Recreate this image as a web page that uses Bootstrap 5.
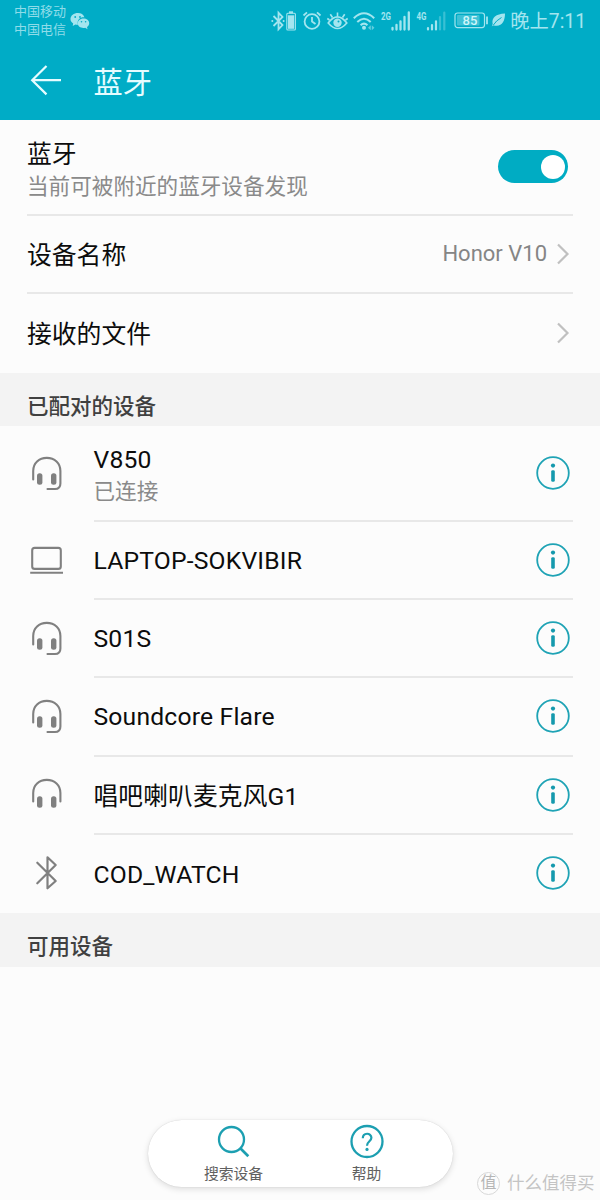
<!DOCTYPE html>
<html lang="zh-CN">
<head>
<meta charset="utf-8">
<meta name="viewport" content="width=device-width, initial-scale=1">
<title>蓝牙</title>
<link href="https://cdn.jsdelivr.net/npm/bootstrap@5.3.0/dist/css/bootstrap.min.css" rel="stylesheet">
<style>
  body { font-family: Roboto, "Noto Sans CJK SC", sans-serif; background: #fcfcfc; color: #0c0c0c; }
  svg { display: block; overflow: visible; flex: none; }
  .screen { width: 600px; height: 1200px; overflow: hidden; }
  .topbar { height: 120px; background: #00acc6; }
  .status { height: 40px; color: #a3e5ef; padding: 1px 14px 0; }
  .carriers { font-size: 13px; line-height: 18px; color: #8fdce9; padding-top: 1px; }
  .status-icons { gap: 5px; }
  .clock { font-size: 19.3px; line-height: 38px; padding-top: 2px; white-space: nowrap; }
  .titlebar { height: 80px; padding: 0 27px; color: #e6fcff; }
  .titlebar h1 { font-size: 29.2px; line-height: 40px; font-weight: 400; margin-left: 28.5px; padding-top: 6px; }
  .setting { margin: 0 27px; height: 78px; border-bottom: 2px solid #e8e8e8; font-size: 24.8px; line-height: 30px; }
  .setting.tall { height: 96px; }
  .setting.final { border-bottom: 0; height: 79px; padding-bottom: 1px; }
  .setting .label { padding-top: 3px; }
  .two-line { padding-top: 4px; }
  .device { padding: 0 27px; height: 78.2px; }
  .device.tall { height: 96px; }
  .device-icon { width: 66.5px; color: #808080; padding-bottom: 3px; }
  .device-body { height: 100%; border-bottom: 2px solid #e8e8e8; font-size: 24.7px; line-height: 30px; }
  .device-body svg { margin-right: 3px; }
  .device:last-child .device-body { border-bottom-color: transparent; }
  .latin { letter-spacing: .18px; padding-top: 1px; }
  .sub { font-size: 21.6px; line-height: 30px; padding-top: 2px; color: #8a8a8a; }
  .value { font-size: 22px; color: #858585; }
  .section { height: 54px; padding: 13px 27px 0; background: #f3f3f3; color: #404040; font-size: 21.5px; line-height: 42px; font-weight: 500; margin: 0; }
  .section.paired { height: 53px; line-height: 41px; }
  .toggle { width: 70px; height: 33px; background: #00acc3; padding: 0 3.5px; margin: 0 5px 1px 0; }
  .toggle span { width: 24px; height: 24px; background: #fff; }
  .dock { left: 148px; top: 1120px; width: 305px; height: 67px; background: #fff; box-shadow: 0 2px 6px rgba(0,0,0,.13), 0 0 1px rgba(0,0,0,.2); color: #1c9fb1; }
  .dock-item { width: 133px; font-size: 14.8px; line-height: 20px; }
  .dock-item span { color: #606060; padding-top: 2px; margin-left: -1px; }
  .watermark { left: 477px; top: 1171px; color: #c4c4c4; font-size: 17.5px; line-height: 25px; white-space: nowrap; gap: 7px; }
  .stamp { width: 23px; height: 23px; border: 1px solid #d8d8d8; font-size: 16px; line-height: 20px; color: #b5b5b5; }
</style>
</head>
<body>
<svg width="0" height="0" class="position-absolute" aria-hidden="true">
  <defs>
    <symbol id="info" viewBox="0 0 34 34"><circle cx="17" cy="17" r="15.8" fill="none" stroke="#1fa3b5" stroke-width="1.8"/><circle cx="17" cy="9.6" r="2.1" fill="#1599ad"/><rect x="15.2" y="14.2" width="3.6" height="11.6" rx="1.4" fill="#1599ad"/></symbol>
    <symbol id="chevron" viewBox="0 0 14 22"><path d="M2 1.5 L11.5 11 L2 20.5" fill="none" stroke="#c0c0c0" stroke-width="2.2"/></symbol>
    <symbol id="headset" viewBox="0 0 38 38"><g fill="none" stroke="currentColor" stroke-width="2.1" stroke-linecap="round"><path d="M6.2 25.5 V17 C6.2 9 12 3.9 19.8 3.9 S33.4 9 33.4 17 V29.5 Q33.4 35 28 35 H20.5"/></g><rect x="10" y="19.3" width="5.4" height="11.5" rx="2.5" fill="currentColor"/><rect x="24" y="19.3" width="5.4" height="11.5" rx="2.5" fill="currentColor"/></symbol>
    <symbol id="headphones" viewBox="0 0 38 38"><path d="M6.2 26.5 V18 C6.2 10 12 4.9 19.8 4.9 S33.4 10 33.4 18 V26.5" fill="none" stroke="currentColor" stroke-width="2.1" stroke-linecap="round"/><rect x="10" y="21.3" width="5.4" height="11.5" rx="2.5" fill="currentColor"/><rect x="24" y="21.3" width="5.4" height="11.5" rx="2.5" fill="currentColor"/></symbol>
    <symbol id="laptop" viewBox="0 0 38 38"><g fill="none" stroke="currentColor" stroke-width="2.1"><rect x="5.2" y="6.9" width="28.6" height="21" rx="2.5"/><path d="M3.2 31.8 H36"/></g></symbol>
    <symbol id="bluetooth" viewBox="0 0 38 38"><path d="M10.3 9.7 L28.7 28 L20.5 35.3 V4.3 L28.7 12 L10.3 30.3" fill="none" stroke="currentColor" stroke-width="2.2" stroke-linejoin="round" stroke-linecap="round"/></symbol>
  </defs>
</svg>

<main class="screen position-relative">
  <header class="topbar">
    <div class="status d-flex align-items-center justify-content-between">
      <div class="d-flex align-items-center">
        <div class="carriers">中国移动<br>中国电信</div>
        <svg class="ms-1" width="20" height="20" viewBox="0 0 20 20">
          <path d="M8 2 C3.8 2 .5 4.6 .5 8 C.5 10 1.5 11.4 3.2 12.5 L2.7 15 L5.4 13.5 Q6.7 14 8 13.8 C6.5 8.6 10.5 6 14.5 6.4 C13.6 3.5 11 2 8 2Z" fill="#a3e5ef"/>
          <path d="M13.5 7.4 C9.7 7.4 7.8 9.8 7.8 12.3 C7.8 15.8 11.3 17.6 15.2 16.8 L17.5 18.2 L17 16 C18.5 15 19.2 13.6 19.2 12.2 C19.2 9.4 16.6 7.4 13.5 7.4Z" fill="#a3e5ef"/>
          <g fill="#00acc6"><circle cx="5.2" cy="6" r=".9"/><circle cx="10" cy="6" r=".9"/><circle cx="11.5" cy="10.8" r=".8"/><circle cx="15.6" cy="10.8" r=".8"/></g>
        </svg>
      </div>
      <div class="status-icons d-flex align-items-center">
        <svg width="26" height="24" viewBox="-1 0 26 24"><path d="M2.5 7 L11.5 16 L7.5 20.2 V3.8 L11.5 8 L2.5 17" fill="none" stroke="currentColor" stroke-width="1.8"/><circle cx="1.3" cy="12" r="1" fill="currentColor"/><circle cx="12.6" cy="12" r="1" fill="currentColor"/><path d="M18 2.3 H22 V4.5 H18Z" fill="currentColor"/><rect x="15.8" y="4.3" width="8.6" height="16.7" rx="1" fill="none" stroke="currentColor" stroke-width="1.1"/><rect x="17" y="6.3" width="6.2" height="13.5" fill="currentColor"/></svg>
        <svg width="20" height="24" viewBox="-1 0 20 24"><g fill="none" stroke="currentColor" stroke-width="1.8"><circle cx="10" cy="12.5" r="7.4"/><path d="M10 8 V12.5 L13.5 15 M1.5 6.5 L5 3.3 M15 3.3 L18.5 6.5"/></g></svg>
        <svg width="21" height="24" viewBox="-1 0 21 24"><g fill="none" stroke="currentColor" stroke-width="1.6"><path d="M1.2 14 Q10.5 1.8 19.8 14 Q10.5 25 1.2 14Z"/><path d="M10.5 7 V3.5 M5.5 8.5 L3.3 5.2 M15.5 8.5 L17.7 5.2 M2.5 11 L.3 9.5 M18.5 11 L20.7 9.5"/></g><circle cx="10.5" cy="13.8" r="4.2" fill="currentColor"/><circle cx="11.5" cy="12.5" r="1" fill="#00acc6"/></svg>
        <svg width="22" height="24" viewBox="-1 0 22 24"><g fill="none" stroke="currentColor" stroke-width="2"><path d="M.8 9.3 Q11 -.7 21.2 9.3"/><path d="M4.3 13 Q11 6.6 17.7 13"/><path d="M7.6 16.3 Q11 13 14.4 16.3"/></g><circle cx="11" cy="18.7" r="2" fill="currentColor"/><path d="M15 18.7 L17.8 16.2 V21.2Z M21.5 18.7 L18.8 16.2 V21.2Z" fill="currentColor" opacity=".6"/></svg>
        <svg width="31" height="24" viewBox="-1 0 31 24"><text x="1" y="10.5" font-size="10" font-weight="700" textLength="10" lengthAdjust="spacingAndGlyphs" fill="currentColor">2G</text><path d="M12.5 19 V20.5 M16.5 16 V20.5 M20.5 12.3 V20.5 M24.5 8 V20.5 M28.8 3.5 V20.5" stroke="currentColor" stroke-width="2.3" stroke-linecap="round"/></svg>
        <svg width="30" height="24" viewBox="-1 0 30 24"><text x=".5" y="10.5" font-size="10" font-weight="700" textLength="10" lengthAdjust="spacingAndGlyphs" fill="currentColor">4G</text><g stroke="currentColor" stroke-width="2.2" stroke-linecap="round"><path d="M12 19 V20.5 M16 16 V20.5 M20 12.3 V20.5"/><path d="M24 8 V20.5 M28.3 3.5 V20.5" opacity=".35"/></g></svg>
        <svg width="35" height="24" viewBox="-1 0 35 24"><rect x="4" y="4" width="29.5" height="14.6" rx="2.5" fill="none" stroke="currentColor" stroke-width="1.2"/><rect x="6" y="6" width="22.5" height="10.6" rx="1" fill="currentColor" opacity=".38"/><text x="19" y="15.8" text-anchor="middle" font-size="13" font-weight="500" fill="#d0f6fa">85</text><path d="M36 7.5 V15.3" stroke="currentColor" stroke-width="1.8"/></svg>
        <svg width="15" height="24" viewBox="-1 0 15 24"><path d="M14 4.5 C5 5 .3 8.5 1.7 15 L.8 17.2 L2.7 16.4 C10.5 18.5 14 12.5 14 4.5Z" fill="currentColor"/><path d="M2 16.5 Q5 11.5 10.5 8.5" fill="none" stroke="#00acc6" stroke-width="1"/></svg>
        <span class="clock">晚上7:11</span>
      </div>
    </div>
    <div class="titlebar d-flex align-items-center">
      <svg width="38" height="38" viewBox="0 0 38 38"><path d="M19.5 5 L5.2 19.2 L19.5 33.4 M5.2 19.2 H34" fill="none" stroke="currentColor" stroke-width="2.2"/></svg>
      <h1 class="mb-0">蓝牙</h1>
    </div>
  </header>

  <section>
    <div class="setting tall d-flex align-items-center justify-content-between">
      <div class="two-line"><div class="label">蓝牙</div><div class="sub">当前可被附近的蓝牙设备发现</div></div>
      <div class="toggle rounded-pill d-flex align-items-center justify-content-end"><span class="rounded-circle"></span></div>
    </div>
    <div class="setting d-flex align-items-center justify-content-between">
      <span class="label">设备名称</span>
      <span class="d-flex align-items-center value">Honor V10<svg style="margin:0 3px 0 9px" width="14" height="22"><use href="#chevron"/></svg></span>
    </div>
    <div class="setting final d-flex align-items-center justify-content-between">
      <span class="label">接收的文件</span>
      <svg style="margin-right:3px" width="14" height="22"><use href="#chevron"/></svg>
    </div>
  </section>

  <h2 class="section paired">已配对的设备</h2>
  <section>
    <div class="device tall d-flex align-items-center">
      <div class="device-icon"><svg width="38" height="38"><use href="#headset"/></svg></div>
      <div class="device-body flex-grow-1 d-flex align-items-center justify-content-between"><div class="two-line"><div class="latin">V850</div><div class="sub">已连接</div></div><svg width="34" height="34"><use href="#info"/></svg></div>
    </div>
    <div class="device d-flex align-items-center">
      <div class="device-icon"><svg width="38" height="38"><use href="#laptop"/></svg></div>
      <div class="device-body flex-grow-1 d-flex align-items-center justify-content-between"><span class="latin">LAPTOP-SOKVIBIR</span><svg width="34" height="34"><use href="#info"/></svg></div>
    </div>
    <div class="device d-flex align-items-center">
      <div class="device-icon"><svg width="38" height="38"><use href="#headset"/></svg></div>
      <div class="device-body flex-grow-1 d-flex align-items-center justify-content-between"><span class="latin">S01S</span><svg width="34" height="34"><use href="#info"/></svg></div>
    </div>
    <div class="device d-flex align-items-center">
      <div class="device-icon"><svg width="38" height="38"><use href="#headset"/></svg></div>
      <div class="device-body flex-grow-1 d-flex align-items-center justify-content-between"><span class="latin">Soundcore Flare</span><svg width="34" height="34"><use href="#info"/></svg></div>
    </div>
    <div class="device d-flex align-items-center">
      <div class="device-icon"><svg width="38" height="38"><use href="#headphones"/></svg></div>
      <div class="device-body flex-grow-1 d-flex align-items-center justify-content-between"><span class="latin pt-1">唱吧喇叭麦克风G1</span><svg width="34" height="34"><use href="#info"/></svg></div>
    </div>
    <div class="device d-flex align-items-center">
      <div class="device-icon"><svg width="38" height="38"><use href="#bluetooth"/></svg></div>
      <div class="device-body flex-grow-1 d-flex align-items-center justify-content-between"><span class="latin pt-1">COD_WATCH</span><svg width="34" height="34"><use href="#info"/></svg></div>
    </div>
  </section>
  <h2 class="section">可用设备</h2>

  <nav class="dock position-absolute rounded-pill d-flex justify-content-center">
    <div class="dock-item d-flex flex-column align-items-center pt-1">
      <svg width="34" height="38" viewBox="0 0 34 38"><g fill="none" stroke="currentColor" stroke-width="2.3"><circle cx="14.5" cy="15.5" r="12.5"/><path d="M23.3 24.3 L31.3 32.3" stroke-width="2.7"/></g></svg>
      <span>搜索设备</span>
    </div>
    <div class="dock-item d-flex flex-column align-items-center pt-1">
      <svg width="34" height="38" viewBox="0 0 34 38"><circle cx="17" cy="17.5" r="15.5" fill="none" stroke="currentColor" stroke-width="2.3"/><path d="M12.8 14.3 C12.8 8.2 21.4 8.5 21.4 13.8 C21.4 17.3 17 17.3 17 21.8" fill="none" stroke="currentColor" stroke-width="2.2"/><circle cx="17" cy="25.4" r="1.6" fill="currentColor"/></svg>
      <span>帮助</span>
    </div>
  </nav>
  <div class="watermark position-absolute d-flex align-items-center"><span class="stamp rounded-circle text-center">值</span><span>什么值得买</span></div>
</main>
<script src="https://cdn.jsdelivr.net/npm/bootstrap@5.3.0/dist/js/bootstrap.bundle.min.js"></script>
</body>
</html>
